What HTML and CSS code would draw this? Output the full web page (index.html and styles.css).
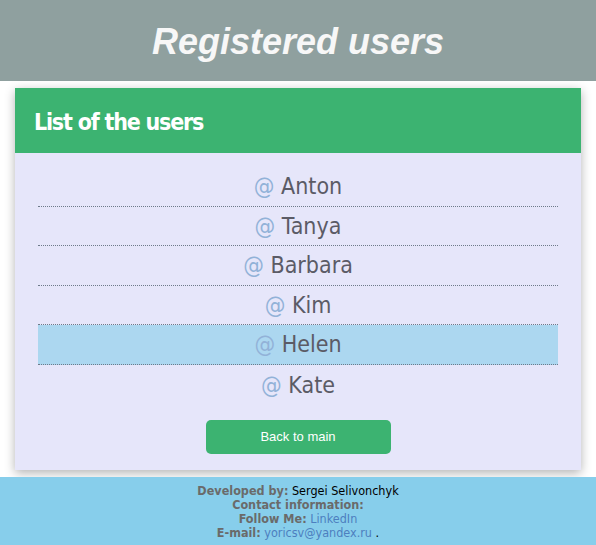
FILE: index.html
```html
<!DOCTYPE html>
<html>
<head>
<meta charset="utf-8">
<link rel="stylesheet" href="styles.css">
</head>
<body>
<header class="top">
  <h1 class="top-title">Registered users</h1>
</header>
<main class="card">
  <div class="card-head">
    <h2 class="card-title">List of the users</h2>
  </div>
  <div class="card-body">
    <ul class="users">
      <li class="user"><span class="at">@</span> Anton</li>
      <li class="user"><span class="at">@</span> Tanya</li>
      <li class="user"><span class="at">@</span> Barbara</li>
      <li class="user"><span class="at">@</span> Kim</li>
      <li class="user active"><span class="at">@</span> Helen</li>
      <li class="user last"><span class="at">@</span> Kate</li>
    </ul>
    <a class="btn" href="#">Back to main</a>
  </div>
</main>
<footer class="foot">
  <div><b>Developed by:</b> <span class="name">Sergei Selivonchyk</span></div>
  <div><b>Contact information:</b></div>
  <div><b>Follow Me:</b> <a class="link" href="#">LinkedIn</a></div>
  <div><b>E-mail:</b> <a class="link" href="#">yoricsv@yandex.ru</a> <span class="name">.</span></div>
</footer>
</body>
</html>
```
FILE: styles.css
```css
html, body {
  margin: 0;
  padding: 0;
  background: #ffffff;
  font-family: "DejaVu Sans Condensed", "DejaVu Sans", sans-serif;
}
.top {
  height: 81px;
  background: #8fa09f;
  display: flex;
  align-items: center;
  justify-content: center;
}
.top-title {
  margin: 2px 0 0;
  font-family: "Liberation Sans", Arial, sans-serif;
  font-style: italic;
  font-weight: bold;
  font-size: 36px;
  color: #f7f7f7;
}
.card {
  margin: 7px 15px 0;
  background: #e6e6fa;
  box-shadow: 0 3px 10px rgba(0,0,0,0.3);
}
.card-head {
  height: 65px;
  background: #3cb371;
  display: flex;
  align-items: center;
  padding-left: 19px;
}
.card-title {
  margin: 2px 0 0;
  font-size: 23px;
  font-weight: bold;
  letter-spacing: -1.2px;
  color: #ffffff;
}
.card-body {
  padding: 14px 23px 16px;
  display: flex;
  flex-direction: column;
  align-items: center;
}
.users {
  list-style: none;
  margin: 0;
  padding: 0;
  width: 100%;
}
.user {
  height: 38.5px;
  line-height: 38.5px;
  text-align: center;
  font-size: 23px;
  color: #5b5b66;
  border-bottom: 1px dotted #6e7a8a;
}
.user.last {
  border-bottom: none;
  height: 40px;
  line-height: 40px;
}
.user.active {
  background: #acd7f0;
}
.at {
  color: #92b2d8;
}
.btn {
  margin-top: 15px;
  width: 185px;
  height: 34px;
  line-height: 34px;
  border-radius: 5px;
  background: #3cb371;
  color: #ffffff;
  text-align: center;
  text-decoration: none;
  font-family: "Liberation Sans", Arial, sans-serif;
  font-size: 13px;
}
.foot {
  margin-top: 7px;
  background: #87ceeb;
  height: 68px;
  padding-top: 7px;
  box-sizing: border-box;
  text-align: center;
  font-family: "DejaVu Sans Condensed", sans-serif;
  font-size: 12.5px;
  line-height: 14px;
  color: #666666;
}
.foot b {
  color: #6a6a6a;
}
.name {
  color: #000000;
}
.link {
  color: #4d7fbf;
  text-decoration: none;
}
```
